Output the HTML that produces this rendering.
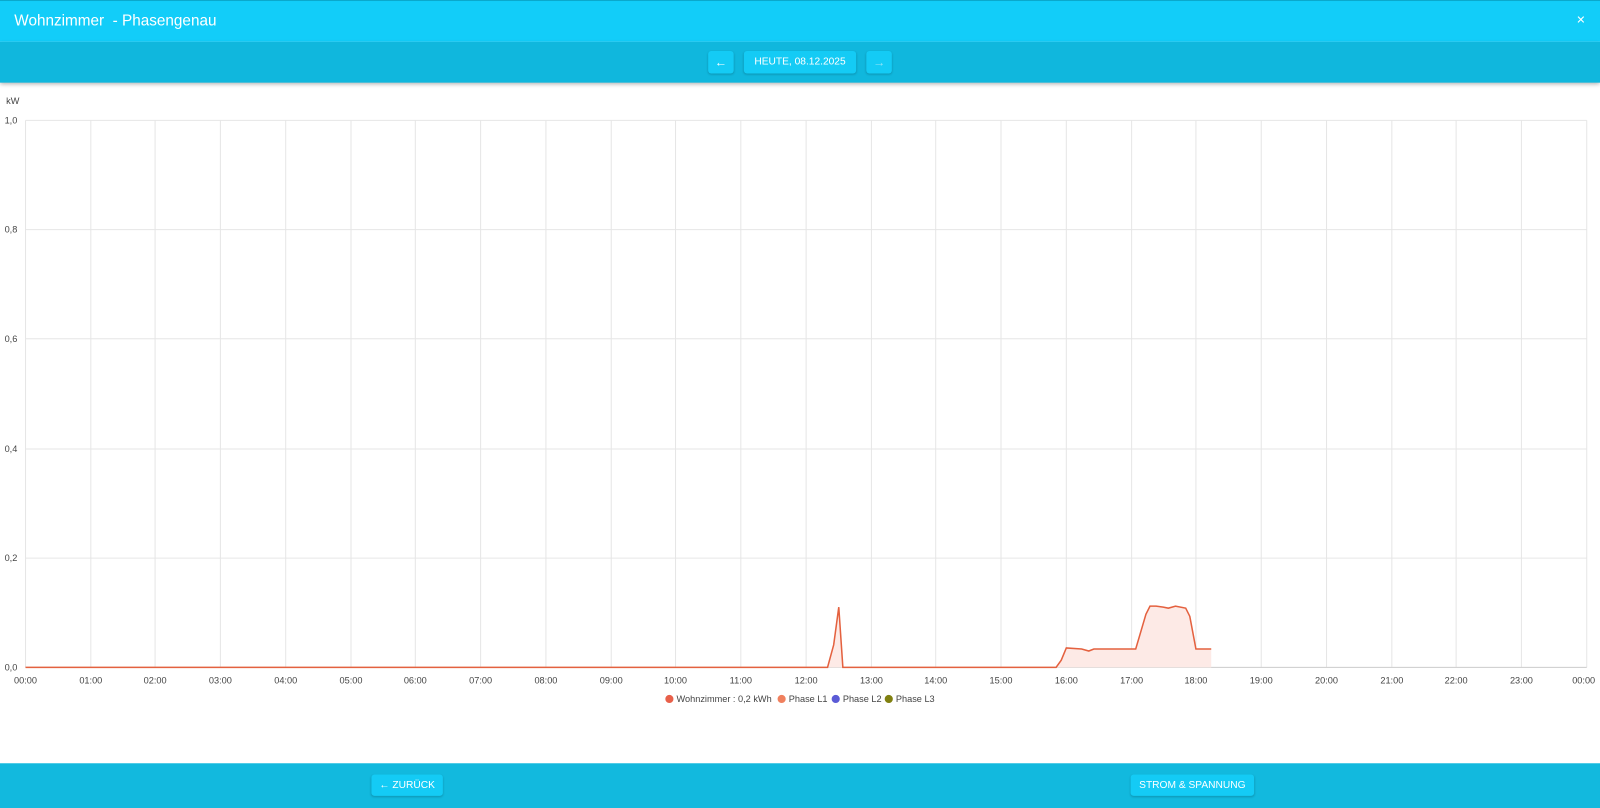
<!DOCTYPE html>
<html><head><meta charset="utf-8"><style>
html,body{margin:0;width:1600px;height:808px;overflow:hidden;background:#fff}
#w{position:absolute;left:0;top:0;width:1568px;height:792px;transform:scale(1.02041);transform-origin:0 0;font-family:"Liberation Sans",sans-serif}
.h1{position:absolute;left:0;top:0;width:1568px;height:41px;background:#12cdf9;border-top:1px solid #0aa8cc;box-sizing:border-box}
.h1 .t{position:absolute;left:14px;top:11px;color:#fff;font-size:15px}
.h1 .x{position:absolute;right:14px;top:12px;color:#fff;font-size:11px}
.h2{position:absolute;left:0;top:41px;width:1568px;height:40px;background:#10b7dd;box-shadow:0 2px 4px rgba(0,0,0,.3)}
.btn{position:absolute;background:#14cbf5;color:#fff;font-size:10px;border-radius:3px;text-align:center;box-shadow:0 1px 2px rgba(0,0,0,.2)}
.ft{position:absolute;left:0;top:748px;width:1568px;height:44px;background:#12b9de}
svg text{font-family:"Liberation Sans",sans-serif;font-size:9px;fill:#444}
</style></head><body><div id="w">
<div class="h1"><div class="t">Wohnzimmer &nbsp;- Phasengenau</div><div class="x">✕</div></div>
<div class="h2">
<div class="btn" style="left:694px;top:9px;width:25px;height:22px;line-height:22px;font-size:12px">←</div>
<div class="btn" style="left:729px;top:9px;width:110px;height:22px;line-height:22px">HEUTE, 08.12.2025</div>
<div class="btn" style="left:849px;top:9px;width:25px;height:22px;line-height:22px;font-size:12px;color:#8fe3f7">→</div>
</div>
<svg width="1568" height="748" style="position:absolute;left:0;top:0">
<text x="6" y="102">kW</text>
<g stroke="#e6e6e6" stroke-width="1">
<line x1="25" y1="118" x2="1555" y2="118"/><line x1="25" y1="225" x2="1555" y2="225"/><line x1="25" y1="332" x2="1555" y2="332"/><line x1="25" y1="440" x2="1555" y2="440"/><line x1="25" y1="547" x2="1555" y2="547"/>
<line x1="25" y1="118" x2="25" y2="654"/><line x1="89" y1="118" x2="89" y2="654"/><line x1="152" y1="118" x2="152" y2="654"/><line x1="216" y1="118" x2="216" y2="654"/><line x1="280" y1="118" x2="280" y2="654"/><line x1="344" y1="118" x2="344" y2="654"/><line x1="407" y1="118" x2="407" y2="654"/><line x1="471" y1="118" x2="471" y2="654"/><line x1="535" y1="118" x2="535" y2="654"/><line x1="599" y1="118" x2="599" y2="654"/><line x1="662" y1="118" x2="662" y2="654"/><line x1="726" y1="118" x2="726" y2="654"/><line x1="790" y1="118" x2="790" y2="654"/><line x1="854" y1="118" x2="854" y2="654"/><line x1="917" y1="118" x2="917" y2="654"/><line x1="981" y1="118" x2="981" y2="654"/><line x1="1045" y1="118" x2="1045" y2="654"/><line x1="1109" y1="118" x2="1109" y2="654"/><line x1="1172" y1="118" x2="1172" y2="654"/><line x1="1236" y1="118" x2="1236" y2="654"/><line x1="1300" y1="118" x2="1300" y2="654"/><line x1="1364" y1="118" x2="1364" y2="654"/><line x1="1427" y1="118" x2="1427" y2="654"/><line x1="1491" y1="118" x2="1491" y2="654"/><line x1="1555" y1="118" x2="1555" y2="654"/>
</g>
<line x1="25" y1="654" x2="1555" y2="654" stroke="#ccc"/>
<g text-anchor="end"><text x="17" y="121">1,0</text><text x="17" y="228">0,8</text><text x="17" y="335">0,6</text><text x="17" y="443">0,4</text><text x="17" y="550">0,2</text><text x="17" y="657">0,0</text></g>
<g text-anchor="middle">
<text x="25" y="670">00:00</text><text x="89" y="670">01:00</text><text x="152" y="670">02:00</text><text x="216" y="670">03:00</text><text x="280" y="670">04:00</text><text x="344" y="670">05:00</text><text x="407" y="670">06:00</text><text x="471" y="670">07:00</text><text x="535" y="670">08:00</text><text x="599" y="670">09:00</text><text x="662" y="670">10:00</text><text x="726" y="670">11:00</text><text x="790" y="670">12:00</text><text x="854" y="670">13:00</text><text x="917" y="670">14:00</text><text x="981" y="670">15:00</text><text x="1045" y="670">16:00</text><text x="1109" y="670">17:00</text><text x="1172" y="670">18:00</text><text x="1236" y="670">19:00</text><text x="1300" y="670">20:00</text><text x="1364" y="670">21:00</text><text x="1427" y="670">22:00</text><text x="1491" y="670">23:00</text><text x="1552" y="670">00:00</text>
</g>
<path d="M25 654 L811 654 L817 632 L822 595 L826 654 L1035 654 L1040 647 L1045 635 L1060 636 L1067 638 L1072 636 L1113 636 L1123 602 L1127 594 L1133 594 L1140 595 L1145 596 L1152 594 L1162 596 L1166 604 L1172 636 L1187 636 L1187 654 Z" fill="#fdeae6" stroke="none"/>
<path d="M25 654 L811 654 L817 632 L822 595 L826 654 L1035 654 L1040 647 L1045 635 L1060 636 L1067 638 L1072 636 L1113 636 L1123 602 L1127 594 L1133 594 L1140 595 L1145 596 L1152 594 L1162 596 L1166 604 L1172 636 L1187 636" fill="none" stroke="#e4613f" stroke-width="1.5"/>
<circle cx="656" cy="685" r="4" fill="#e8604a"/><text x="663" y="688">Wohnzimmer : 0,2 kWh</text>
<circle cx="766" cy="685" r="4" fill="#f0805e"/><text x="773" y="688">Phase L1</text>
<circle cx="819" cy="685" r="4" fill="#5b5bd6"/><text x="826" y="688">Phase L2</text>
<circle cx="871" cy="685" r="4" fill="#808010"/><text x="878" y="688">Phase L3</text>
</svg>
<div class="ft">
<div class="btn" style="left:364px;top:11px;width:70px;height:21px;line-height:21px">← ZURÜCK</div>
<div class="btn" style="left:1108px;top:11px;width:121px;height:21px;line-height:21px">STROM &amp; SPANNUNG</div>
</div>
</div></body></html>
